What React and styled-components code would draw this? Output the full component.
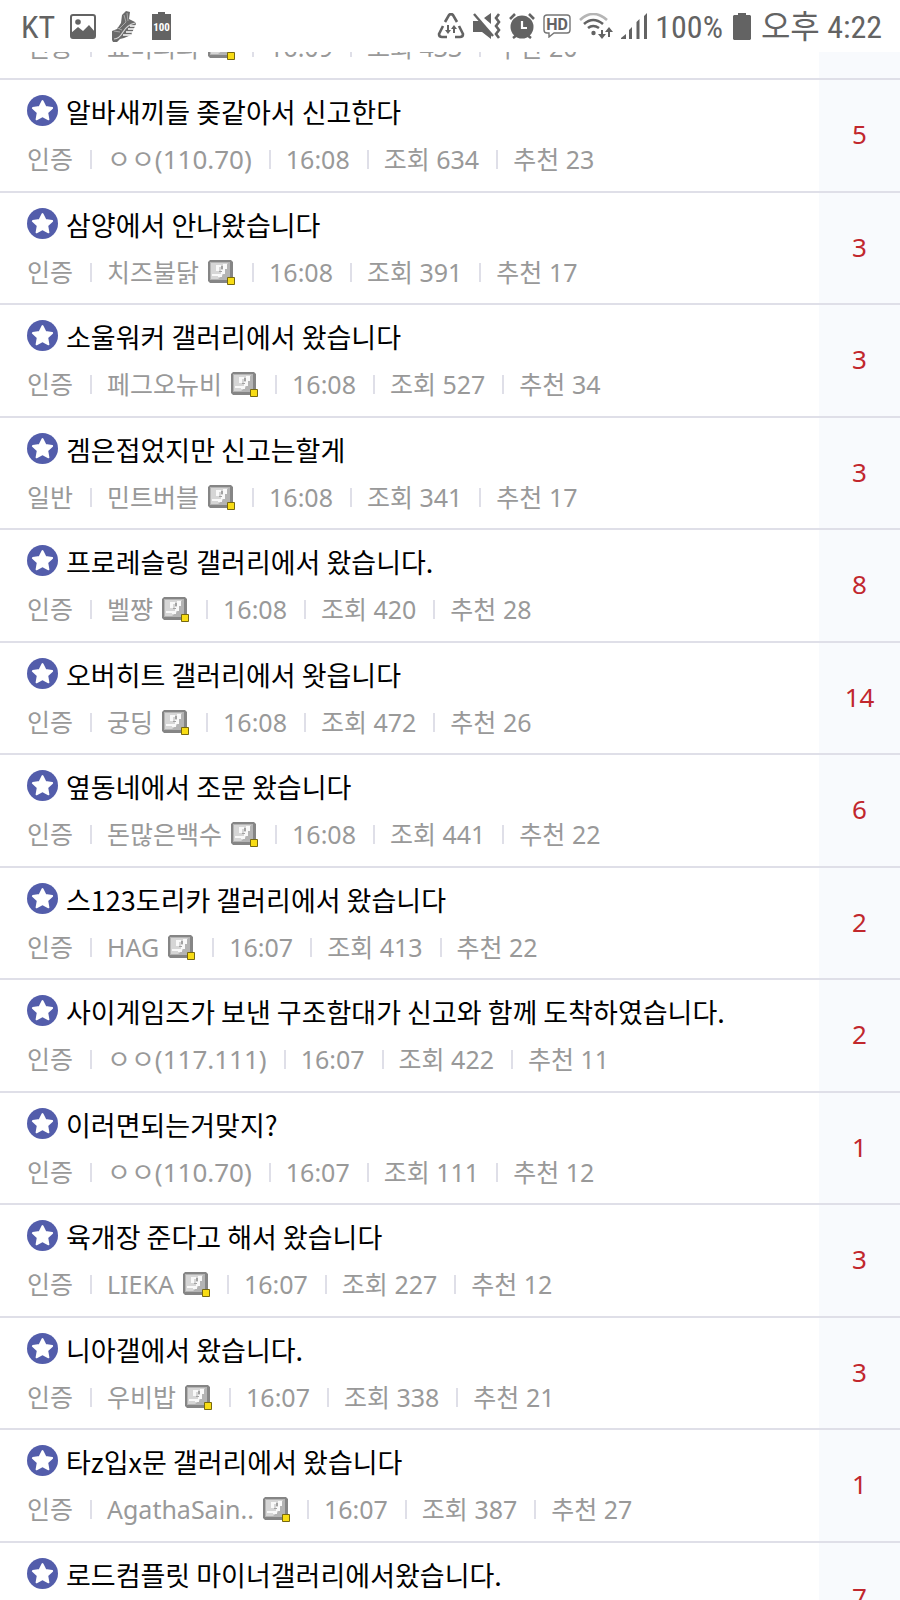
import styled, { createGlobalStyle } from "styled-components";

const posts = [
    { id: 1, tag: "인증", writer: "표미피피", member: true, time: "16:09", views: 433, likes: 20 },
    { id: 2, title: "알바새끼들 좆같아서 신고한다", tag: "인증", writer: "ㅇㅇ(110.70)", time: "16:08", views: 634, likes: 23, replies: 5 },
    { id: 3, title: "삼양에서 안나왔습니다", tag: "인증", writer: "치즈불닭", member: true, time: "16:08", views: 391, likes: 17, replies: 3 },
    { id: 4, title: "소울워커 갤러리에서 왔습니다", tag: "인증", writer: "페그오뉴비", member: true, time: "16:08", views: 527, likes: 34, replies: 3 },
    { id: 5, title: "겜은접었지만 신고는할게", tag: "일반", writer: "민트버블", member: true, time: "16:08", views: 341, likes: 17, replies: 3 },
    { id: 6, title: "프로레슬링 갤러리에서 왔습니다.", tag: "인증", writer: "벨쨩", member: true, time: "16:08", views: 420, likes: 28, replies: 8 },
    { id: 7, title: "오버히트 갤러리에서 왓읍니다", tag: "인증", writer: "궁딩", member: true, time: "16:08", views: 472, likes: 26, replies: 14 },
    { id: 8, title: "옆동네에서 조문 왔습니다", tag: "인증", writer: "돈많은백수", member: true, time: "16:08", views: 441, likes: 22, replies: 6 },
    { id: 9, title: "스123도리카 갤러리에서 왔습니다", tag: "인증", writer: "HAG", member: true, time: "16:07", views: 413, likes: 22, replies: 2 },
    { id: 10, title: "사이게임즈가 보낸 구조함대가 신고와 함께 도착하였습니다.", tag: "인증", writer: "ㅇㅇ(117.111)", time: "16:07", views: 422, likes: 11, replies: 2 },
    { id: 11, title: "이러면되는거맞지?", tag: "인증", writer: "ㅇㅇ(110.70)", time: "16:07", views: 111, likes: 12, replies: 1 },
    { id: 12, title: "육개장 준다고 해서 왔습니다", tag: "인증", writer: "LIEKA", member: true, time: "16:07", views: 227, likes: 12, replies: 3 },
    { id: 13, title: "니아갤에서 왔습니다.", tag: "인증", writer: "우비밥", member: true, time: "16:07", views: 338, likes: 21, replies: 3 },
    { id: 14, title: "타z입x문 갤러리에서 왔습니다", tag: "인증", writer: "AgathaSain..", member: true, time: "16:07", views: 387, likes: 27, replies: 1 },
    { id: 15, title: "로드컴플릿 마이너갤러리에서왔습니다.", replies: 7 },
];

const StarIcon = () => (
    <Star viewBox="0 0 31 31" aria-hidden="true">
        <circle cx="15.5" cy="15.5" r="15.5" fill="#535dab" />
        <path
            d="M15.500 6l3 6 6.700 1-4.900 4.700 1.200 6.700-6-3.100-6 3.100 1.200-6.700L5.800 13l6.700-1z"
            fill="#fff"
            stroke="#fff"
            strokeWidth="1.8"
            strokeLinejoin="round"
        />
    </Star>
);

const MemberIcon = () => (
    <Badge viewBox="0 0 27 25" aria-hidden="true">
        <path d="M2 0h21l2 2v19l-2 2H2l-2-2V2z" fill="#858585" />
        <path d="M2 2h20v18H2z" fill="#b4b4b4" />
        <path d="M3 3h17l-3 5-2 7-5 4H3z" fill="#d6d6d6" />
        <path d="M8 5h5v2h-2v4H8zM15 4h4v5h-2v5h-3v3h-4v-3h3v-4h2zM4 14h7v2H4z" fill="#f9f9f9" />
        <path d="M13 6h2v3h-2zM11 11h3v1h-3z" fill="#a2a2a2" />
        <path d="M19.5 17.5h7v7h-7z" fill="#f8dc14" stroke="#77680f" />
    </Badge>
);

const PhotoIcon = () => (
    <svg width="26" height="25" viewBox="0 0 26 25" aria-hidden="true">
        <rect x="1" y="1" width="24" height="23" rx="2" fill="none" stroke="#636363" strokeWidth="2" />
        <circle cx="8" cy="8" r="2.8" fill="#636363" />
        <path d="M1 19l7-6 5 4 6-6 6 7v6H1z" fill="#636363" />
    </svg>
);

const ShoeIcon = () => (
    <svg width="26" height="31" viewBox="0 0 26 31" aria-hidden="true">
        <path d="M11 4l4-4 4 1-1 7 6 3 1 2-5 11-7 3-4 1-3 3H2l-1-2V20l5-2 4-6z" fill="#6a6a6a" />
        <path d="M24 12q-8 2-12 9T3 28" fill="none" stroke="#d5d5d5" strokeWidth="1.2" />
        <path d="M13 4l2 7-7 7M16 2l1 8M3 20l6 1M6 17l5 2" fill="none" stroke="#a8a8a8" strokeWidth="1" />
        <path d="M19 15h6M17 18h7M15 21h7M12 24h8" fill="none" stroke="#fff" strokeWidth="1.4" />
    </svg>
);

const FullBatteryIcon = () => (
    <svg width="19" height="28" viewBox="0 0 19 28" aria-hidden="true">
        <path d="M6 0h7v2h6v26H0V2h6z" fill="#636363" />
        <text x="9.5" y="19" textAnchor="middle" fill="#fff" fontSize="11" fontWeight="700" fontFamily="'Roboto Condensed', Roboto, sans-serif">100</text>
    </svg>
);

const DataSaverIcon = () => (
    <svg width="28" height="26" viewBox="0 0 28 26" fill="none" stroke="#636363" strokeWidth="2.6" aria-hidden="true">
        <path d="M8 9l4-7q2-2 4 0l4 7M22 13l4 8q0 3-3 3h-5M6 13l-4 8q0 3 3 3h5" />
        <path d="M11 12v7M17 14v6" strokeWidth="2" />
        <path d="M8 17h6l-3 4zM14 16h6l-3-4z" fill="#636363" stroke="none" />
    </svg>
);

const VibrateIcon = () => (
    <svg width="28" height="27" viewBox="0 0 28 27" aria-hidden="true">
        <path d="M0 8h6l12 12v6l-9-7H0zM11 5l7-5v11z" fill="#636363" />
        <path d="M1 1l19 22" stroke="#636363" strokeWidth="2.4" />
        <path d="M26 1l-3 4 3 4-3 4 3 4-3 4 3 4" fill="none" stroke="#636363" strokeWidth="2.6" />
    </svg>
);

const AlarmIcon = () => (
    <svg width="26" height="26" viewBox="0 0 26 26" aria-hidden="true">
        <circle cx="13" cy="14" r="11.500" fill="#636363" />
        <path d="M1 6l5-5M25 6l-5-5M4 25l4-3M22 25l-4-3" stroke="#636363" strokeWidth="2.6" />
        <path d="M13 8v7h5" fill="none" stroke="#fff" strokeWidth="2.2" />
    </svg>
);

const HdIcon = () => (
    <svg width="28" height="24" viewBox="0 0 28 24" aria-hidden="true">
        <path d="M4 1h20q3 0 3 3v12q0 3-3 3H11l-5 4v-4H4q-3 0-3-3V4q0-3 3-3z" fill="none" stroke="#757575" strokeWidth="1.4" />
        <text x="14" y="16" textAnchor="middle" fill="#636363" fontSize="16" fontWeight="700" fontFamily="Roboto, sans-serif">HD</text>
    </svg>
);

const WifiIcon = () => (
    <svg width="34" height="27" viewBox="0 0 34 27" fill="none" strokeWidth="2.6" aria-hidden="true">
        <path d="M1 7q13-12 27 0" stroke="#b5b5b5" />
        <path d="M5 11q9-8 19 0M9 15q5-4 11 0" stroke="#636363" />
        <circle cx="14.500" cy="20" r="2.200" fill="#636363" />
        <path d="M23 17v6M30 24v-7" stroke="#636363" strokeWidth="2" />
        <path d="M19 21h8l-4 5zM26 19h8l-4-5z" fill="#636363" />
    </svg>
);

const SignalIcon = () => (
    <svg width="26" height="26" viewBox="0 0 26 26" fill="#636363" aria-hidden="true">
        <path d="M0 26v-1l5-4v5zM8 17l3-3v12H8zM15.500 9l3-3v20h-3zM23 3l3-3v26h-3z" />
    </svg>
);

const BatteryIcon = () => (
    <svg width="18" height="27" viewBox="0 0 18 27" aria-hidden="true">
        <path d="M5 0h8v2h4l1 1v23l-1 1H1l-1-1V3l1-1h4z" fill="#636363" />
    </svg>
);

const Post = ({ post }) => (
    <Row>
        <Body href={"#post-" + post.id}>
            {post.title &&
                <Title>
                    <StarIcon />
                    {post.title}
                </Title>
            }
            {post.tag &&
                <Meta>
                    <Item>{post.tag}</Item>
                    <Item $large={!post.member}>
                        {post.writer}
                        {post.member && <MemberIcon />}
                    </Item>
                    <Item>{post.time}</Item>
                    <Item>조회 {post.views}</Item>
                    <Item>추천 {post.likes}</Item>
                </Meta>
            }
        </Body>
        <Replies href={"#replies-" + post.id}>{post.replies}</Replies>
    </Row>
);

const App = () => (
    <Screen>
        <GlobalStyle />
        <StatusBar>
            <Group $gap="15px">
                <Label>KT</Label>
                <PhotoIcon />
                <ShoeIcon />
                <FullBatteryIcon />
            </Group>
            <Group $gap="8px">
                <DataSaverIcon />
                <VibrateIcon />
                <AlarmIcon />
                <HdIcon />
                <WifiIcon />
                <SignalIcon />
                <Group $gap="10px">
                    <Label>100%</Label>
                    <BatteryIcon />
                    <Label>오후 4:22</Label>
                </Group>
            </Group>
        </StatusBar>
        <Viewport>
            <List>
                {posts.map((post) => <Post key={post.id} post={post} />)}
            </List>
        </Viewport>
    </Screen>
);

const GlobalStyle = createGlobalStyle`
    * {
        box-sizing: border-box;
    }

    body {
        margin: 0;
        background: #fff;
        font-family: "Noto Sans", "Noto Sans CJK KR", sans-serif;
    }
`

const Screen = styled.div`
    height: 100vh;

    display: flex;
    flex-direction: column;
    overflow: hidden;
`

const StatusBar = styled.header`
    height: 52px;
    padding: 0 18px 0 21px;
    flex-shrink: 0;

    display: flex;
    justify-content: space-between;
    align-items: center;
    background: #fff;
`

const Group = styled.div`
    display: flex;
    align-items: center;
    gap: ${props => props.$gap};
`

const Label = styled.span`
    padding-top: 2px;

    font-family: "Roboto Condensed", Roboto, "Noto Sans CJK KR", sans-serif;
    font-size: 32px;
    line-height: 48px;
    color: #636363;
    white-space: nowrap;
`

const Viewport = styled.main`
    flex: 1;
    min-height: 0;
    overflow: hidden;
`

/* scrolled so that the first post is partly behind the status bar */
const List = styled.ul`
    margin: -48px 0 0;
    padding: 0;
    list-style: none;
`

const Row = styled.li`
    display: flex;

    &:last-child {
        min-height: 112px;
    }
`

const Body = styled.a`
    flex: 1;
    min-width: 0;
    padding: 14px 0 13px 27px;
    border-bottom: 2px solid #dfdfe8;

    color: #000;
    text-decoration: none;

    ${Row}:nth-child(even) & {
        padding-bottom: 14px;
    }
`

const Title = styled.div`
    display: flex;
    align-items: center;
    gap: 8px;

    font-family: "Noto Sans CJK KR", sans-serif;
    font-size: 27px;
    line-height: 36px;
    white-space: nowrap;
`

const Star = styled.svg`
    width: 31px;
    height: 31px;
    margin-bottom: 4px;
`

const Meta = styled.div`
    margin-top: 11px;

    display: flex;
    align-items: center;

    font-size: 25px;
    line-height: 36px;
    color: #999;
    white-space: nowrap;
`

const Item = styled.span`
    display: flex;
    align-items: center;
    gap: 9px;
    font-size: ${props => props.$large ? "26px" : "25px"};
    white-space: pre;

    &:not(:first-child)::before {
        content: "";
        width: 2px;
        height: 19px;
        margin: 0 6px 0 17px;
        background: #dfdfe8;
    }
`

const Badge = styled.svg`
    width: 27px;
    height: 25px;
`

const Replies = styled.a`
    width: 9%;
    min-width: 80px;
    padding-bottom: 3px;

    display: flex;
    justify-content: center;
    align-items: center;
    background: #f8fafd;
    border-bottom: 2px solid #dfdfe8;

    font-size: 26px;
    line-height: 36px;
    color: #c1272d;
    text-decoration: none;
`

export default App;
